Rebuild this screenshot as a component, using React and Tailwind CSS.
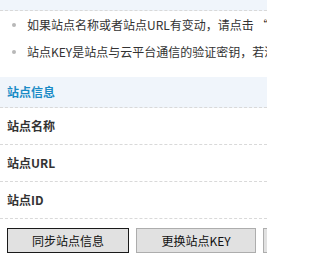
import React from "react";

const tips = [
  "如果站点名称或者站点URL有变动，请点击 “同步站点信息” 按钮更新",
  "站点KEY是站点与云平台通信的验证密钥，若泄露请点击更换",
];

const rows = ["站点名称", "站点URL", "站点ID"];

export default function App() {
  return (
    <div className="w-[267px] h-[272px] overflow-hidden bg-white whitespace-nowrap text-[12px] text-[#333] font-['Noto_Sans_CJK_SC','Noto_Sans',sans-serif]">
      {/* top band */}
      <div className="h-[11px] bg-[#f0f5fb] border-b border-dashed border-[#d9d9d9]" />

      {/* tips */}
      <ul>
        {tips.map((t) => (
          <li key={t} className="flex h-[27px] items-center pl-[12px]">
            <span className="mr-[11px] h-[4px] w-[4px] shrink-0 rounded-full bg-[#b8b8b8]" />
            <span>{t}</span>
          </li>
        ))}
      </ul>

      {/* section header */}
      <div className="mt-[12px] flex h-[31px] items-center border-b border-dashed border-[#d9d9d9] bg-[#f0f5fb] px-[7px]">
        <span className="font-bold text-[#1a8bc6]">站点信息</span>
      </div>

      {rows.map((r) => (
        <div key={r} className="flex h-[37px] items-center border-b border-dashed border-[#d9d9d9] px-[7px]">
          <span className="font-bold text-[#333]">{r}</span>
        </div>
      ))}

      {/* buttons */}
      <div className="mt-[9px] flex gap-[7px] pl-[7px]">
        <button className="h-[25px] w-[122px] shrink-0 border border-[#1a1a1a] bg-[#e1e1e1] text-[12px] text-[#111]">
          同步站点信息
        </button>
        <button className="h-[25px] w-[120px] shrink-0 border border-[#adadad] bg-[#e1e1e1] text-[12px] text-[#111]">
          更换站点KEY
        </button>
        <button className="h-[25px] w-[100px] shrink-0 border border-[#adadad] bg-[#e1e1e1] text-[12px] text-[#111]">
          刷新
        </button>
      </div>
    </div>
  );
}
